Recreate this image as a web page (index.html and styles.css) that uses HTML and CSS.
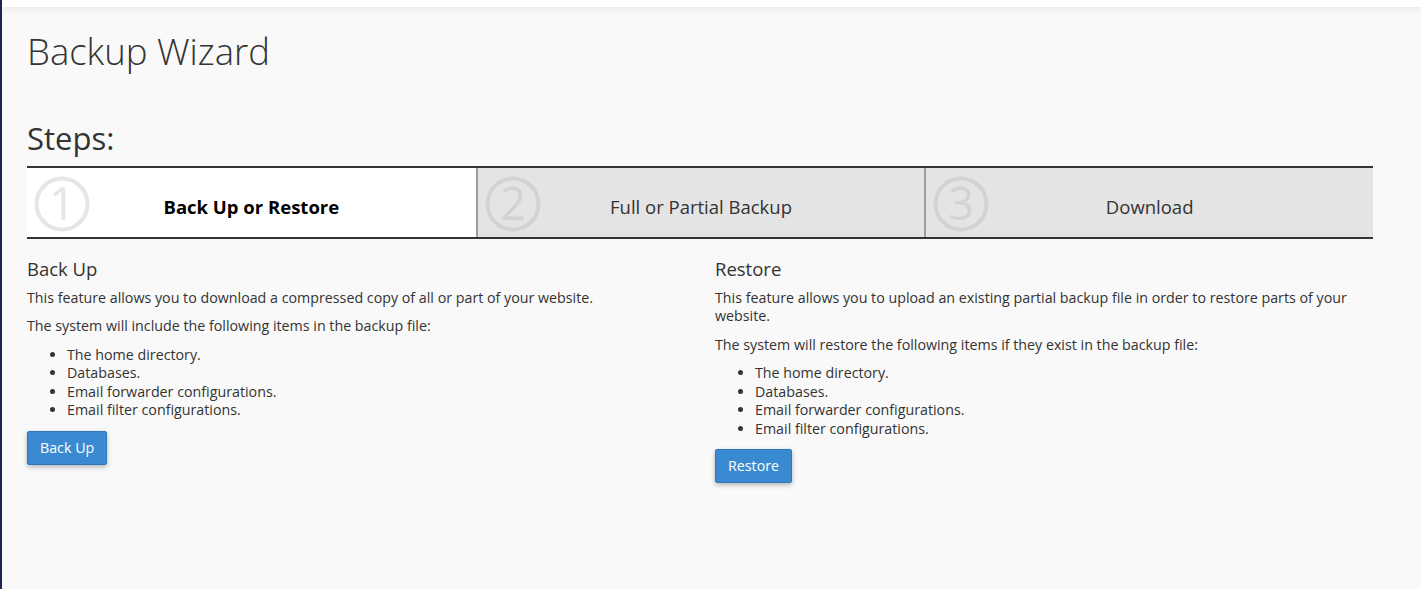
FILE: index.html
```
<!DOCTYPE html>
<html lang="en">
<head>
    <meta charset="UTF-8">
    <meta name="viewport" content="width=device-width, initial-scale=1.0">
    <title>Backup Wizard</title>
    <link rel="stylesheet" href="styles.css">
</head>
<body>
    <div class="page">
        <div class="topbar"></div>

        <div class="content">
            <h1 class="page-title">Backup Wizard</h1>

            <h2 class="steps-title">Steps:</h2>
            <div class="steps">
                <div class="step active">
                    <svg class="step-num" viewBox="0 0 56 56" aria-hidden="true">
                        <circle cx="28" cy="28" r="25.5"/>
                        <text x="28" y="44">1</text>
                    </svg>
                    <span class="step-label">Back Up or Restore</span>
                </div>
                <div class="step">
                    <svg class="step-num" viewBox="0 0 56 56" aria-hidden="true">
                        <circle cx="28" cy="28" r="25.5"/>
                        <text x="28" y="44">2</text>
                    </svg>
                    <span class="step-label">Full or Partial Backup</span>
                </div>
                <div class="step">
                    <svg class="step-num" viewBox="0 0 56 56" aria-hidden="true">
                        <circle cx="28" cy="28" r="25.5"/>
                        <text x="28" y="44">3</text>
                    </svg>
                    <span class="step-label">Download</span>
                </div>
            </div>

            <div class="columns">
                <section class="panel">
                    <h3>Back Up</h3>
                    <p>This feature allows you to download a compressed copy of all or part of your website.</p>
                    <p>The system will include the following items in the backup file:</p>
                    <ul>
                        <li>The home directory.</li>
                        <li>Databases.</li>
                        <li>Email forwarder configurations.</li>
                        <li>Email filter configurations.</li>
                    </ul>
                    <button class="btn">Back Up</button>
                </section>

                <section class="panel">
                    <h3>Restore</h3>
                    <p>This feature allows you to upload an existing partial backup file in order to restore parts of your website.</p>
                    <p>The system will restore the following items if they exist in the backup file:</p>
                    <ul>
                        <li>The home directory.</li>
                        <li>Databases.</li>
                        <li>Email forwarder configurations.</li>
                        <li>Email filter configurations.</li>
                    </ul>
                    <button class="btn">Restore</button>
                </section>
            </div>
        </div>
    </div>
</body>
</html>
```

FILE: styles.css
```
* {
    box-sizing: border-box;
}

body {
    margin: 0;
    background: #f9f9f9;
    font-family: 'Open Sans', 'Liberation Sans', sans-serif;
    font-size: 14.25px;
    line-height: 18.5px;
    color: #333;
}

.page {
    min-height: 100vh;
    border-left: 2px solid #1d2553;
}

.topbar {
    height: 7px;
    background: #fff;
    box-shadow: 0 2px 6px rgba(0, 0, 0, 0.08);
}

.content {
    padding: 0 48px 0 25px;
}

.page-title {
    margin: 24px 0 0;
    font-size: 36.5px;
    font-weight: 300;
    line-height: 1.1;
}

.steps-title {
    margin: 50px 0 11px;
    font-size: 31px;
    font-weight: 400;
    line-height: 1.1;
}

.steps {
    display: grid;
    grid-template-columns: 1fr 1fr 1fr;
    border-top: 2px solid #333;
    border-bottom: 2px solid #333;
    height: 73px;
}

.step {
    position: relative;
    display: flex;
    align-items: center;
    justify-content: center;
    padding-top: 10px;
    background: #e4e4e4;
    border-left: 2px solid #9e9e9e;
    font-size: 18.5px;
}

.step.active {
    background: #fff;
    border-left: none;
    font-weight: 700;
    color: #000;
}

.step-num {
    position: absolute;
    left: 7px;
    top: 8px;
    width: 56px;
    height: 56px;
    overflow: visible;
}

.step-num circle {
    fill: none;
    stroke: #d3d3d3;
    stroke-width: 4;
}

.step-num text {
    fill: #d3d3d3;
    font-family: 'Open Sans', sans-serif;
    font-size: 45px;
    font-weight: 400;
    text-anchor: middle;
}

.step.active .step-num circle {
    stroke: #e6e6e6;
}

.step.active .step-num text {
    fill: #e6e6e6;
}

.step-label {
    position: relative;
}

.columns {
    display: grid;
    grid-template-columns: 1fr 1fr;
    gap: 30px;
}

.panel h3 {
    margin: 20px 0 9px;
    font-size: 18.5px;
    font-weight: 400;
    line-height: 1.1;
}

.panel p {
    margin: 0 0 10px;
}

.panel ul {
    margin: 0 0 11px;
    padding-left: 40px;
}

.btn {
    padding: 6px 12px;
    font-family: inherit;
    font-size: 14.25px;
    line-height: 20px;
    color: #fff;
    background: #3a8ad1;
    border: 1px solid #2f78bb;
    border-radius: 2px;
    box-shadow: 0 2px 5px rgba(0, 0, 0, 0.28);
    cursor: pointer;
}
```
